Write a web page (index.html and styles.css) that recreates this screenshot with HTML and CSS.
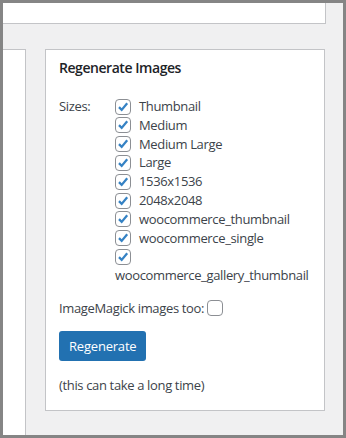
FILE: index.html
```html
<!DOCTYPE html>
<html lang="en">
<head>
    <meta charset="UTF-8">
    <meta name="viewport" content="width=device-width, initial-scale=1.0">
    <title>Regenerate Images</title>
    <link rel="stylesheet" href="styles.css">
</head>
<body>

    <div class="frame">
        <div class="topbar"></div>

        <div class="columns">
            <div class="side"></div>

            <div class="postbox">
                <h2 class="postbox-title">Regenerate Images</h2>

                <div class="inside">
                    <div class="sizes">
                        <span class="sizes-label">Sizes:</span>
                        <div class="size-list">
                            <label class="size"><span class="check"><svg viewBox="0 0 16 16"><path d="M3.4 8.2 L6.5 11.3 L12.8 3.8"/></svg></span> Thumbnail</label>
                            <label class="size"><span class="check"><svg viewBox="0 0 16 16"><path d="M3.4 8.2 L6.5 11.3 L12.8 3.8"/></svg></span> Medium</label>
                            <label class="size"><span class="check"><svg viewBox="0 0 16 16"><path d="M3.4 8.2 L6.5 11.3 L12.8 3.8"/></svg></span> Medium Large</label>
                            <label class="size"><span class="check"><svg viewBox="0 0 16 16"><path d="M3.4 8.2 L6.5 11.3 L12.8 3.8"/></svg></span> Large</label>
                            <label class="size"><span class="check"><svg viewBox="0 0 16 16"><path d="M3.4 8.2 L6.5 11.3 L12.8 3.8"/></svg></span> 1536x1536</label>
                            <label class="size"><span class="check"><svg viewBox="0 0 16 16"><path d="M3.4 8.2 L6.5 11.3 L12.8 3.8"/></svg></span> 2048x2048</label>
                            <label class="size"><span class="check"><svg viewBox="0 0 16 16"><path d="M3.4 8.2 L6.5 11.3 L12.8 3.8"/></svg></span> woocommerce_thumbnail</label>
                            <label class="size"><span class="check"><svg viewBox="0 0 16 16"><path d="M3.4 8.2 L6.5 11.3 L12.8 3.8"/></svg></span> woocommerce_single</label>
                            <label class="size"><span class="check"><svg viewBox="0 0 16 16"><path d="M3.4 8.2 L6.5 11.3 L12.8 3.8"/></svg></span> woocommerce_gallery_thumbnail</label>
                        </div>
                    </div>

                    <label class="magick">ImageMagick images too:<span class="check empty"></span></label>

                    <button class="button" type="button">Regenerate</button>

                    <p class="note">(this can take a long time)</p>
                </div>
            </div>
        </div>
    </div>

</body>
</html>
```

FILE: styles.css
```css
body {
    margin: 0;
    font-family: "Open Sans", "Noto Sans", sans-serif;
    font-size: 13px;
    letter-spacing: -0.35px;
    color: #3c434a;
}
.frame {
    width: 346px;
    height: 438px;
    box-sizing: border-box;
    border: 3px solid #858585;
    background: #f0f0f1;
    display: flex;
    flex-direction: column;
}
.topbar {
    width: 322px;
    height: 20px;
    background: #fff;
    border-right: 1px solid #c3c4c7;
    border-bottom: 1px solid #c3c4c7;
}
.columns {
    flex: 1;
    display: flex;
    gap: 19px;
    margin-top: 25px;
}
.side {
    width: 22px;
    background: #fff;
    border-top: 1px solid #c3c4c7;
    border-right: 1px solid #c3c4c7;
}
.postbox {
    align-self: flex-start;
    width: 278px;
    background: #fff;
    border: 1px solid #c3c4c7;
}
.postbox-title {
    margin: 0;
    padding: 8px 13px 0;
    font-size: 14px;
    font-weight: 600;
    letter-spacing: -0.45px;
    line-height: 20px;
    color: #1d2327;
}
.inside {
    padding: 0 12px 15px 13px;
}
.sizes {
    display: flex;
    margin-top: 19px;
    line-height: 18.8px;
}
.sizes-label {
    width: 56px;
    flex-shrink: 0;
}
.size-list {
    width: 197px;
}
.size {
    display: block;
}
.check {
    display: inline-block;
    width: 16px;
    height: 16px;
    box-sizing: border-box;
    border: 1px solid #8c8f94;
    border-radius: 4px;
    background: #fff;
    vertical-align: middle;
    margin: -2px 5px 0 0;
}
.check svg {
    display: block;
    width: 14px;
    height: 14px;
    fill: none;
    stroke: #3582c4;
    stroke-width: 2.6;
}
.magick {
    display: block;
    margin-top: 14px;
    line-height: 18.8px;
}
.magick .check {
    margin: -2px 0 0 3px;
}
.button {
    display: block;
    margin-top: 13px;
    height: 30px;
    padding: 0 10px;
    border: none;
    border-radius: 3px;
    background: #2271b1;
    color: #fff;
    font-family: inherit;
    font-size: 13px;
    letter-spacing: -0.2px;
    cursor: pointer;
}
.note {
    margin: 15px 0 0;
    line-height: 18.8px;
}
```
